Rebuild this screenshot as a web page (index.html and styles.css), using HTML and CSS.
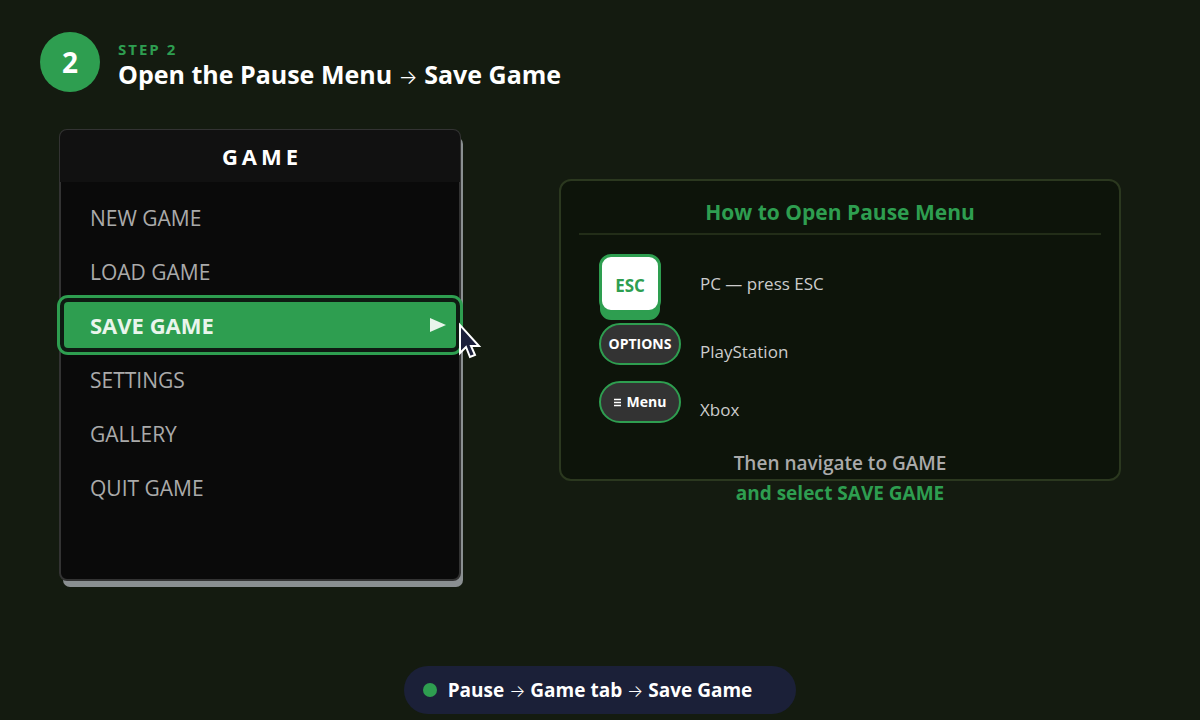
FILE: index.html
```html
<!DOCTYPE html>
<html lang="en">
<head>
    <meta charset="UTF-8">
    <meta name="viewport" content="width=device-width, initial-scale=1.0">
    <title>Step 2 - Save Game</title>
    <link rel="stylesheet" href="styles.css">
</head>
<body>
    <header class="step-header">
        <div class="step-badge">2</div>
        <div class="step-text">
            <p class="step-label">STEP 2</p>
            <h1 class="step-title">Open the Pause Menu <span class="arrow">→</span> Save Game</h1>
        </div>
    </header>

    <main class="stage">
        <nav class="game-menu">
            <h2 class="menu-header">GAME</h2>
            <div class="menu-list">
                <button class="menu-item">NEW GAME</button>
                <button class="menu-item">LOAD GAME</button>
                <button class="menu-item selected">
                    SAVE GAME
                    <svg class="play" viewBox="0 0 16 14"><path d="M0 0L16 7L0 14Z"/></svg>
                    <svg class="cursor" viewBox="0 0 26 40"><path d="M3 3V31L9 25L13 35L18 33L14 24H22Z"/></svg>
                </button>
                <button class="menu-item">SETTINGS</button>
                <button class="menu-item">GALLERY</button>
                <button class="menu-item">QUIT GAME</button>
            </div>
        </nav>

        <section class="panel">
            <h2 class="panel-title">How to Open Pause Menu</h2>
            <div class="key-row">
                <kbd class="key">ESC</kbd>
                <span class="key-label">PC — press ESC</span>
            </div>
            <div class="key-row pad-row">
                <kbd class="pad-button">OPTIONS</kbd>
                <span class="key-label">PlayStation</span>
            </div>
            <div class="key-row pad-row">
                <kbd class="pad-button"><svg class="bars" viewBox="0 0 7 9"><path d="M0 1.5H7M0 4.5H7M0 7.5H7"/></svg>Menu</kbd>
                <span class="key-label">Xbox</span>
            </div>
            <div class="note">
                <p class="note-line">Then navigate to GAME</p>
                <p class="note-line note-strong">and select SAVE GAME</p>
            </div>
        </section>
    </main>

    <footer class="summary">
        <span class="dot"></span>
        <span>Pause <span class="arrow">→</span> Game tab <span class="arrow">→</span> Save Game</span>
    </footer>
</body>
</html>
```
FILE: styles.css
```css
* {
    box-sizing: border-box;
}

body {
    margin: 0;
    min-height: 100vh;
    padding: 32px 40px 6px;
    display: flex;
    flex-direction: column;
    font-family: "Open Sans", "Noto Sans", sans-serif;
    color: #ffffff;
    background-color: #141b10;
}

h1, h2, p {
    margin: 0;
}

.step-header {
    display: flex;
    align-items: center;
    gap: 18px;
}

.step-badge {
    width: 60px;
    height: 60px;
    border-radius: 50%;
    background-color: #2e9e50;
    font-size: 28px;
    font-weight: 700;
    line-height: 60px;
    text-align: center;
}

.step-text {
    padding-top: 7px;
}

.step-label {
    font-size: 15px;
    font-weight: 700;
    line-height: 20px;
    letter-spacing: 2px;
    color: #2e9e50;
}

.step-title {
    font-size: 25px;
    font-weight: 700;
    line-height: 30px;
}

.arrow {
    font-family: "Inter", sans-serif;
    font-size: 17px;
    font-weight: 300;
}

.step-title .arrow {
    font-size: 20px;
}

.stage {
    display: grid;
    grid-template-columns: 402fr 562fr;
    gap: 98px;
    align-items: start;
    padding: 37px 39px 0 19px;
}

.game-menu {
    min-height: 452px;
    border: 2px solid #333333;
    border-radius: 8px;
    background-color: #0a0a0a;
    box-shadow: 3px 7px 0 -1px #8a8f91;
}

.menu-header {
    margin: -1px -1px 0;
    padding-left: 4px;
    border-radius: 7px 7px 0 0;
    background-color: #111111;
    font-size: 22px;
    font-weight: 700;
    line-height: 52px;
    letter-spacing: 4px;
    text-align: center;
}

.menu-list {
    display: flex;
    flex-direction: column;
    gap: 8px;
    padding: 12px 3px;
}

.menu-item {
    position: relative;
    display: flex;
    align-items: center;
    justify-content: space-between;
    height: 46px;
    padding: 2px 10px 0 26px;
    border: none;
    border-radius: 4px;
    background: none;
    font-family: inherit;
    font-size: 21px;
    line-height: 30px;
    color: #aaaaaa;
    cursor: pointer;
}

.menu-item.selected {
    padding-top: 0;
    background-color: #2e9e50;
    box-shadow: 0 0 0 4px #0e1a12;
    outline: 3px solid #2e9e50;
    outline-offset: 4px;
    font-size: 22px;
    font-weight: 700;
    color: #e9f5ec;
}

.play {
    width: 16px;
    height: 14px;
    fill: #e9f5ec;
}

.cursor {
    position: absolute;
    top: 20px;
    right: -27px;
    width: 26px;
    height: 40px;
    fill: #1b1f3b;
    stroke: #ffffff;
    stroke-width: 2;
}

.panel {
    margin-top: 50px;
    padding: 16px 18px 0;
    border: 2px solid #2b381f;
    border-radius: 12px;
    background-color: #0d140a;
}

.panel-title {
    margin-bottom: 19px;
    padding-bottom: 6px;
    border-bottom: 2px solid #222d18;
    font-size: 21px;
    font-weight: 700;
    line-height: 30px;
    text-align: center;
    color: #2e9e50;
}

.key-row {
    display: grid;
    grid-template-columns: 82px 1fr;
    gap: 19px;
    align-items: center;
    padding-left: 20px;
    margin-bottom: 10px;
}

.pad-row {
    align-items: end;
    margin-bottom: 16px;
}

.key,
.pad-button {
    font-family: inherit;
    font-weight: 700;
    text-align: center;
}

.key {
    width: 62px;
    height: 59px;
    border: 3px solid #2e9e50;
    border-radius: 12px;
    background-color: #ffffff;
    box-shadow: 0 8px 0 -1px #2e9e50;
    font-size: 17px;
    line-height: 58px;
    color: #2e9e50;
}

.pad-button {
    display: flex;
    align-items: center;
    justify-content: center;
    gap: 6px;
    height: 42px;
    border: 2px solid #2e9e50;
    border-radius: 21px;
    background-color: #333333;
    font-size: 14px;
    line-height: 18px;
}

.bars {
    width: 7px;
    height: 9px;
    stroke: #ffffff;
    stroke-width: 1.3;
}

.key-label {
    font-size: 17px;
    line-height: 26px;
    color: #cccccc;
}

.note {
    margin: 25px 0 -29px;
    text-align: center;
}

.note-line {
    font-size: 19px;
    font-weight: 600;
    line-height: 30px;
    color: #aaaaaa;
}

.note-strong {
    font-weight: 700;
    color: #2e9e50;
}

.summary {
    display: flex;
    align-items: center;
    gap: 11px;
    align-self: center;
    height: 48px;
    margin-top: auto;
    padding: 0 44px 0 19px;
    border-radius: 24px;
    background-color: #1b2038;
    font-size: 19px;
    font-weight: 700;
}

.dot {
    width: 14px;
    height: 14px;
    border-radius: 50%;
    background-color: #2e9e50;
}
```
